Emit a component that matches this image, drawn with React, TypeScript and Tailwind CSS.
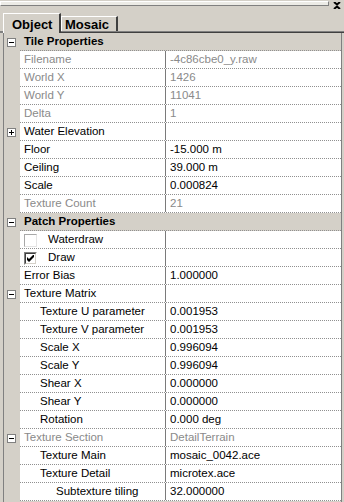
import React from "react";

type Row = {
  name: string;
  value?: string;
  level?: number;
  gray?: boolean;
  expander?: "plus" | "minus";
  header?: boolean;
  check?: "off" | "on";
};

const rows: Row[] = [
  { name: "Tile Properties", header: true },
  { name: "Filename", value: "-4c86cbe0_y.raw", gray: true },
  { name: "World X", value: "1426", gray: true },
  { name: "World Y", value: "11041", gray: true },
  { name: "Delta", value: "1", gray: true },
  { name: "Water Elevation", expander: "plus" },
  { name: "Floor", value: "-15.000 m" },
  { name: "Ceiling", value: "39.000 m" },
  { name: "Scale", value: "0.000824" },
  { name: "Texture Count", value: "21", gray: true },
  { name: "Patch Properties", header: true },
  { name: "Waterdraw", check: "off" },
  { name: "Draw", check: "on" },
  { name: "Error Bias", value: "1.000000" },
  { name: "Texture Matrix", expander: "minus" },
  { name: "Texture U parameter", value: "0.001953", level: 1 },
  { name: "Texture V parameter", value: "0.001953", level: 1 },
  { name: "Scale X", value: "0.996094", level: 1 },
  { name: "Scale Y", value: "0.996094", level: 1 },
  { name: "Shear X", value: "0.000000", level: 1 },
  { name: "Shear Y", value: "0.000000", level: 1 },
  { name: "Rotation", value: "0.000 deg", level: 1 },
  { name: "Texture Section", value: "DetailTerrain", expander: "minus", gray: true },
  { name: "Texture Main", value: "mosaic_0042.ace", level: 1 },
  { name: "Texture Detail", value: "microtex.ace", level: 1 },
  { name: "Subtexture tiling", value: "32.000000", level: 2 },
];

function ExpandBox({ kind }: { kind: "plus" | "minus" }) {
  return (
    <div className="relative w-[9px] h-[9px] border border-[#808080] bg-white">
      <div className="absolute left-[1px] top-[3px] w-[5px] h-px bg-black" />
      {kind === "plus" && <div className="absolute left-[3px] top-[1px] w-px h-[5px] bg-black" />}
    </div>
  );
}

function CheckBox({ on }: { on: boolean }) {
  if (!on) {
    return <div className="w-[13px] h-[13px] border border-[#a8a8a8] border-r-[#e4e4e4] border-b-[#e4e4e4] bg-white" />;
  }
  return (
    <div className="w-[13px] h-[13px] border border-[#808080] border-r-white border-b-white">
      <div className="w-full h-full border border-[#404040] border-r-[#d4d0c8] border-b-[#d4d0c8] bg-white flex items-center justify-center">
        <svg width="7" height="7" viewBox="0 0 7 7">
          <path d="M0 2v3l2 2 5-5V-1L2 4z" fill="#000" />
        </svg>
      </div>
    </div>
  );
}

function PropRow({ row }: { row: Row }) {
  const pad = 4 + (row.level ?? 0) * 16;
  const txt = row.gray ? "text-[#8a8a8a]" : "text-black";
  if (row.header) {
    return (
      <div className="flex h-[18px] bg-[#d4d0c8]">
        <div className="w-[16px] flex items-center pl-[3px]">
          <ExpandBox kind="minus" />
        </div>
        <div className="flex-1 flex items-center pl-[4px] pt-px border-b border-dotted border-[#909090] font-bold text-black">
          {row.name}
        </div>
      </div>
    );
  }
  return (
    <div className="flex h-[18px]">
      <div className="w-[16px] bg-[#d4d0c8] flex items-center pl-[3px]">
        {row.expander && <ExpandBox kind={row.expander} />}
      </div>
      <div className="flex flex-1 bg-white border-b border-dotted border-[#909090]">
        <div
          className={`w-[145px] flex items-center pt-px whitespace-nowrap overflow-hidden ${txt}`}
          style={{ paddingLeft: pad }}
        >
          {row.check ? (
            <>
              <CheckBox on={row.check === "on"} />
              <span className="ml-[11px] text-black">{row.name}</span>
            </>
          ) : (
            row.name
          )}
        </div>
        <div className="w-px bg-[#7a7a7a]" />
        <div className={`flex-1 flex items-center pl-[4px] pt-px whitespace-nowrap ${txt}`}>{row.value}</div>
      </div>
    </div>
  );
}

export default function App() {
  return (
    <div className="w-[344px] h-[502px] bg-[#d4d0c8] overflow-hidden flex flex-col font-['Liberation_Sans',Arial,sans-serif] text-[11.5px] leading-none select-none">
      {/* grip bar */}
      <div className="h-[9px] flex items-start pt-[1px]">
        <div className="flex-1 h-[5px] border border-white border-r-[#808080] border-b-[#808080] bg-[#ecebe6] mr-[4px]" />
        <svg width="8" height="7" viewBox="0 0 8 7" className="mr-[3px] mt-[1px]">
          <path d="M1 0l3 2.5L7 0M1 7l3-2.5L7 7" stroke="#000" strokeWidth="2" fill="none" />
        </svg>
      </div>

      {/* tabs */}
      <div className="h-[24px] flex items-end">
        <div className="w-[3px] h-[2px] bg-[#808080]" />
        <div className="w-[58px] h-[20px] bg-[#d4d0c8] border-l border-t border-white border-r-2 border-r-[#404040] flex items-center pl-[8px] pt-[2px] text-[13px] font-bold text-black">
          Object
        </div>
        <div className="flex flex-col">
          <div className="w-[57px] h-[15px] bg-[#d4d0c8] border-l border-t border-white border-r-2 border-r-[#404040] flex items-center pl-[3px] pt-[1px] text-[13px] font-bold text-black">
            Mosaic
          </div>
          <div className="h-px bg-[#808080]" />
          <div className="h-px bg-[#404040]" />
        </div>
        <div className="flex-1 flex flex-col">
          <div className="h-px bg-[#808080]" />
          <div className="h-px bg-[#404040]" />
        </div>
      </div>

      {/* property grid */}
      <div className="flex-1 ml-[3px] mr-[2px] border-l border-r border-[#808080] flex flex-col">
        {rows.map((r) => (
          <PropRow key={r.name} row={r} />
        ))}
      </div>
    </div>
  );
}
